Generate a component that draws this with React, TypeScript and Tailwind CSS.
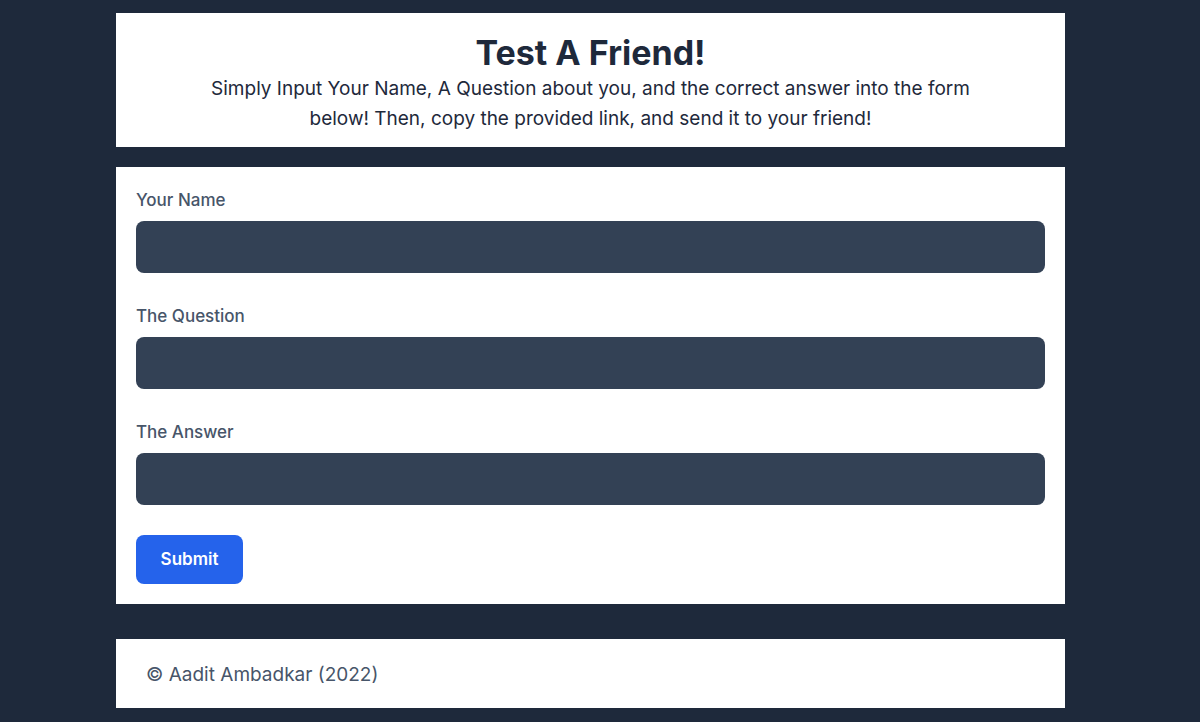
import React from 'react';

const fields = ['Your Name', 'The Question', 'The Answer'];

const App = () => {
  return (
    <div className="min-h-[722px] bg-[#1e293b] pt-[13px] pl-[116px] pb-[14px]" style={{ fontFamily: 'Inter, "Noto Sans", sans-serif' }}>
      <div className="w-[949px]">
        {/* Header */}
        <div className="bg-white pt-[18px] pb-[13px] text-center">
          <h1 className="text-[34px] leading-[43px] font-bold text-[#1e293b]">Test A Friend!</h1>
          <p className="mx-auto max-w-[766px] text-[19px] leading-[30px] text-[#1e293b]">
            Simply Input Your Name, A Question about you, and the correct answer into the form below! Then, copy the provided link, and send it to your friend!
          </p>
        </div>

        {/* Form */}
        <form className="mt-5 bg-white p-5 flex flex-col gap-[30px]" onSubmit={(e) => e.preventDefault()}>
          {fields.map((label) => (
            <div key={label} className="flex flex-col gap-[9px]">
              <label className="pt-px text-[17px] leading-6 font-medium text-[#475569]">{label}</label>
              <input className="h-[52px] w-full rounded-lg bg-[#334155] px-4 text-white outline-none" />
            </div>
          ))}
          <div>
            <button type="submit" className="h-[49px] w-[107px] rounded-lg bg-[#2563eb] pt-px text-[17px] font-semibold text-white">
              Submit
            </button>
          </div>
        </form>

        {/* Footer */}
        <footer className="mt-[35px] h-[69px] bg-white pl-[30px] pt-[3px] flex items-center">
          <span className="text-[19px] text-[#475569]">© Aadit Ambadkar (2022)</span>
        </footer>
      </div>
    </div>
  );
};

export default App;
